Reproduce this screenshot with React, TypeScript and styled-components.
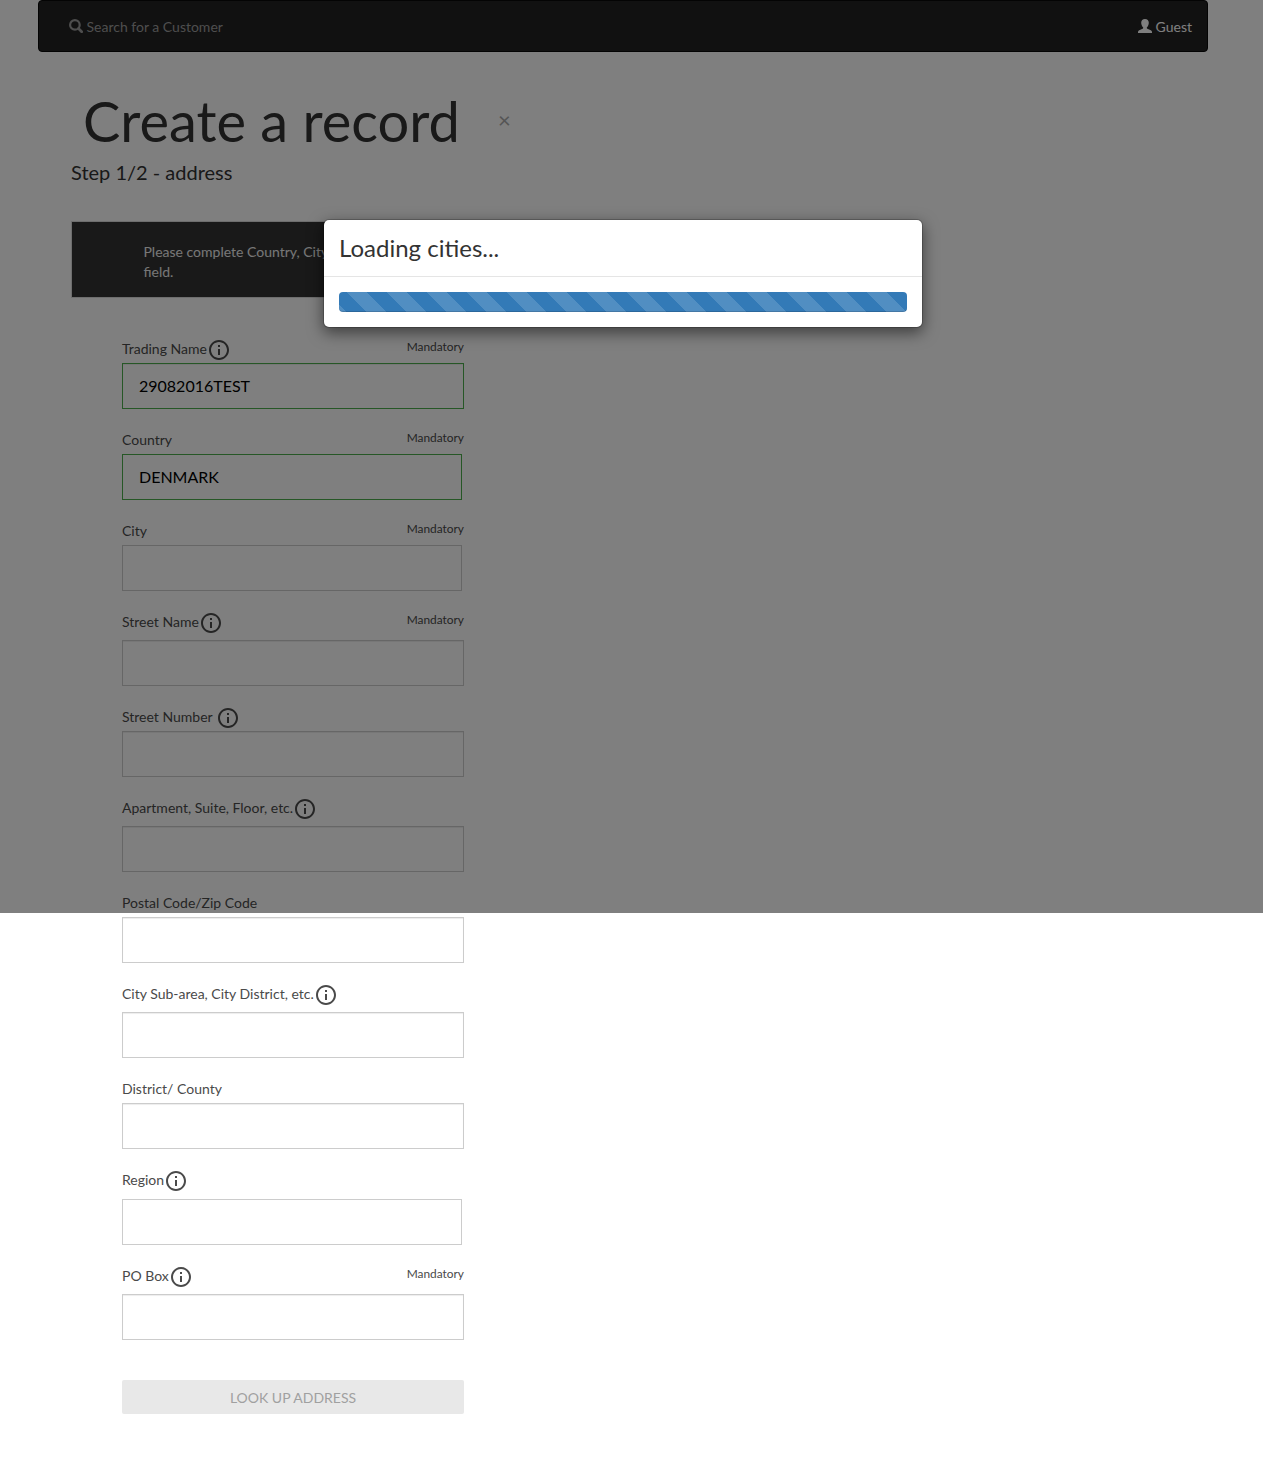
import React from "react";
import styled, { createGlobalStyle } from "styled-components";

const GlobalStyle = createGlobalStyle`
  *, *::before, *::after { box-sizing: border-box; }
  body {
    margin: 0;
    background: #fff;
    color: #333;
    font-family: Lato, "Liberation Sans", sans-serif;
    font-size: 14px;
    line-height: 20px;
  }
`;

const Page = styled.div`
  position: relative;
  min-height: 1473px;
`;

const Navbar = styled.nav`
  display: flex;
  justify-content: space-between;
  align-items: center;
  width: 1170px;
  height: 52px;
  margin-left: 38px;
  padding: 0 15px 0 30px;
  background: #222;
  border: 1px solid #080808;
  border-radius: 4px;
`;

const NavLink = styled.a<{ $bright?: boolean }>`
  display: flex;
  align-items: center;
  gap: 3.5px;
  color: ${(p) => (p.$bright ? "#fff" : "#9d9d9d")};
`;

const NavText = styled.span`
  padding-top: 2px;
`;

const Main = styled.main`
  display: flex;
  flex-direction: column;
  width: 500px;
  margin-left: 71px;
`;

const TitleRow = styled.header`
  display: flex;
  align-items: center;
  gap: 38px;
  height: 62px;
  margin-top: 38px;
  padding-left: 12px;
`;

const Title = styled.h1`
  margin: 0;
  font-size: 56px;
  font-weight: 400;
  line-height: 62px;
  white-space: nowrap;
`;

const Dismiss = styled.button`
  padding: 0 0 2px;
  border: 0;
  background: none;
  color: #aaa;
  font: 400 22px/22px Lato, sans-serif;
`;

const Step = styled.h2`
  margin: 9px 0 0;
  font-size: 20px;
  font-weight: 400;
  line-height: 22px;
  white-space: nowrap;
`;

const Notice = styled.div`
  height: 77px;
  margin-top: 38px;
  padding: 20px 30px 0 71.500px;
  background: #333;
  border: 1px solid #ddd;
  color: #eee;
`;

const Form = styled.form`
  display: flex;
  flex-direction: column;
  gap: 21px;
  width: 342px;
  margin: 41px 0 0 51px;
`;

const Field = styled.div`
  display: flex;
  flex-direction: column;
`;

const LabelRow = styled.div<{ $height: number }>`
  display: flex;
  justify-content: space-between;
  align-items: flex-start;
  height: ${(p) => p.$height}px;
`;

const Label = styled.label<{ $gap?: number }>`
  display: flex;
  gap: ${(p) => p.$gap ?? 0}px;
  height: 20px;
  color: #4a4a4a;
  white-space: nowrap;

  svg { flex: none; margin-top: -1px; }
`;

const Mandatory = styled.span`
  color: #4a4a4a;
  font-size: 11.9px;
  line-height: 16px;
`;

const Input = styled.input<{ $valid?: boolean; $select?: boolean }>`
  width: ${(p) => (p.$select ? 340 : 342)}px;
  height: 46px;
  padding: 0 16px 2px;
  border: 1px solid ${(p) => (p.$valid ? "#4cae4c" : "#ccc")};
  border-radius: 0;
  outline: 0;
  background: #fff;
  box-shadow: ${(p) => (p.$select ? "none" : "inset 0 1px 1px rgba(0, 0, 0, 0.075)")};
  color: #000;
  font: 400 16px/24px Lato, sans-serif;
`;

const Lookup = styled.button`
  height: 34px;
  margin-top: 19px;
  padding: 2px 0 0;
  border: 0;
  border-radius: 2px;
  background: #e8e8e8;
  color: #a0a0a0;
  font: 400 14px/20px Lato, sans-serif;
`;

const Backdrop = styled.div`
  position: absolute;
  inset: 0 0 auto;
  height: 913px;
  background: rgba(0, 0, 0, 0.5);
`;

const Dialog = styled.section`
  width: 600px;
  margin: 219px 0 0 323px;
  background: #fff;
  background-clip: padding-box;
  border: 1px solid rgba(0, 0, 0, 0.2);
  border-radius: 6px;
  box-shadow: 0 5px 15px rgba(0, 0, 0, 0.5);
`;

const DialogHeader = styled.header`
  height: 57px;
  padding: 15px;
  border-bottom: 1px solid #e5e5e5;
`;

const DialogTitle = styled.h3`
  margin: 0;
  font-size: 24px;
  font-weight: 400;
  line-height: 26px;
`;

const DialogBody = styled.div`
  padding: 15px;
`;

const Progress = styled.div`
  height: 20px;
  border-radius: 4px;
  background-color: #337ab7;
  background-image: linear-gradient(
    45deg,
    rgba(255, 255, 255, 0.15) 25%, transparent 25%, transparent 50%,
    rgba(255, 255, 255, 0.15) 50%, rgba(255, 255, 255, 0.15) 75%,
    transparent 75%, transparent
  );
  background-size: 40px 40px;
  background-position: 8px 0;
  box-shadow: inset 0 -1px 0 rgba(0, 0, 0, 0.15);
`;

const SearchIcon = () => (
  <svg width="14" height="14" viewBox="0 0 14 14" fill="none" stroke="currentColor">
    <circle cx="5.9" cy="5.9" r="4.800" strokeWidth="2.200" />
    <path d="M9.500 9.500l3.200 3.200" strokeWidth="2.700" strokeLinecap="round" />
  </svg>
);

const UserIcon = () => (
  <svg width="14" height="14" viewBox="0 0 14 14" fill="currentColor">
    <path d="M7 0C4.600 0 3.200 1.500 3.200 3.700c0 1.800.8 3.600 1.800 4.500.5.600.2 1.200-.4 1.500L1.200 11.300C.4 11.700 0 12.200 0 13v1h14v-1c0-.8-.4-1.300-1.200-1.700L9.400 9.700c-.6-.3-.9-.9-.4-1.500 1-.9 1.800-2.700 1.800-4.500C10.800 1.500 9.400 0 7 0z" />
  </svg>
);

const InfoIcon = () => (
  <svg width="24" height="24" viewBox="0 0 24 24" fill="#4a4a4a">
    <path d="M11 17h2v-6h-2v6zm1-15C6.480 2 2 6.480 2 12s4.480 10 10 10 10-4.480 10-10S17.520 2 12 2zm0 18c-4.410 0-8-3.590-8-8s3.590-8 8-8 8 3.590 8 8-3.590 8-8 8zM11 9h2V7h-2v2z" />
  </svg>
);

type FieldData = {
  label: string;
  height: number;
  info?: boolean;
  gap?: number;
  mandatory?: boolean;
  value?: string;
  select?: boolean;
};

const fields: FieldData[] = [
  { label: "Trading Name", height: 24, info: true, mandatory: true, value: "29082016TEST" },
  { label: "Country", height: 24, mandatory: true, value: "DENMARK", select: true },
  { label: "City", height: 24, mandatory: true, select: true },
  { label: "Street Name", height: 28, info: true, mandatory: true },
  { label: "Street Number", height: 24, info: true, gap: 3 },
  { label: "Apartment, Suite, Floor, etc.", height: 28, info: true },
  { label: "Postal Code/Zip Code", height: 24 },
  { label: "City Sub-area, City District, etc.", height: 28, info: true },
  { label: "District/ County", height: 24 },
  { label: "Region", height: 29, info: true, select: true },
  { label: "PO Box", height: 28, info: true, mandatory: true },
];

export default function App() {
  return (
    <Page>
      <GlobalStyle />
      <Navbar>
        <NavLink><SearchIcon /><NavText>Search for a Customer</NavText></NavLink>
        <NavLink $bright><UserIcon /><NavText>Guest</NavText></NavLink>
      </Navbar>
      <Main>
        <TitleRow>
          <Title>Create a record</Title>
          <Dismiss type="button">×</Dismiss>
        </TitleRow>
        <Step>Step 1/2 - address</Step>
        <Notice>Please complete Country, City<br />field.</Notice>
        <Form>
          {fields.map((f) => (
            <Field key={f.label}>
              <LabelRow $height={f.height}>
                <Label $gap={f.gap}>{f.label}{f.info && <InfoIcon />}</Label>
                {f.mandatory && <Mandatory>Mandatory</Mandatory>}
              </LabelRow>
              <Input $valid={!!f.value} $select={f.select} defaultValue={f.value} />
            </Field>
          ))}
          <Lookup type="button">LOOK UP ADDRESS</Lookup>
        </Form>
      </Main>
      <Backdrop>
        <Dialog>
          <DialogHeader><DialogTitle>Loading cities...</DialogTitle></DialogHeader>
          <DialogBody><Progress /></DialogBody>
        </Dialog>
      </Backdrop>
    </Page>
  );
}
